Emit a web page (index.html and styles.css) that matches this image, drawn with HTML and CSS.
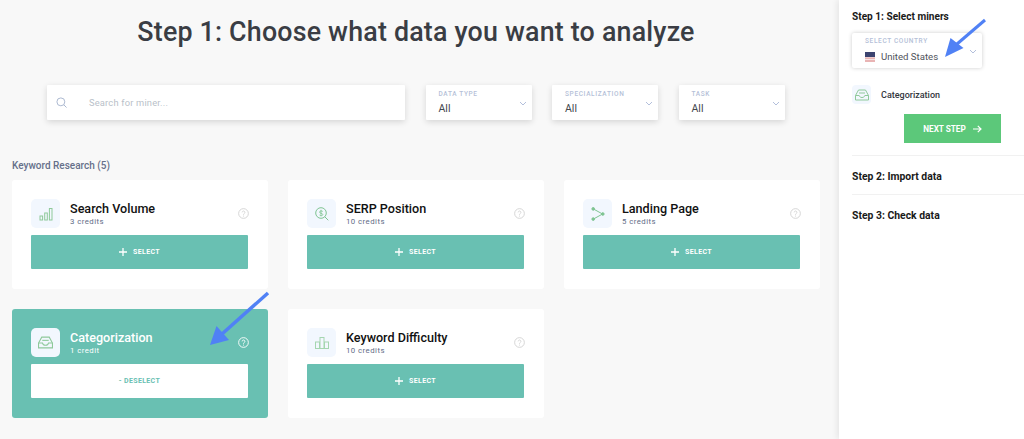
FILE: index.html
```html
<!doctype html>
<html lang="en">
  <head>
    <title>Choose data</title>
    <meta charset="utf-8" />
    <link rel="stylesheet" href="styles.css">
  </head>

  <body>
    <svg width="0" height="0" class="defs">
      <symbol id="i-help" viewBox="0 0 12 12">
        <circle cx="6" cy="6" r="5.300" fill="none" stroke="currentColor" stroke-width="1"/>
        <path d="M4.500 4.800a1.500 1.500 0 1 1 2.400 1.200c-.6.4-.9.7-.9 1.300" fill="none" stroke="currentColor" stroke-width="1"/>
        <circle cx="6" cy="8.800" r=".6" fill="currentColor"/>
      </symbol>
      <symbol id="i-chev" viewBox="0 0 8 5">
        <path d="M1 1l3 3 3-3" fill="none" stroke="currentColor" stroke-width="1"/>
      </symbol>
      <symbol id="i-plus" viewBox="0 0 8 8">
        <path d="M4 0v8M0 4h8" fill="none" stroke="currentColor" stroke-width="1.300"/>
      </symbol>
      <symbol id="i-tray" viewBox="0 0 14 12">
        <g fill="none" stroke="#8ec99a" stroke-width="1">
          <path d="M3.500 1h7l3 5.500V11H.5V6.500z"/>
          <path d="M.5 6.500h3.700c.3 1.400 1.400 2 2.800 2s2.500-.6 2.800-2h3.700"/>
          <path d="M4 4h6"/>
        </g>
      </symbol>
    </svg>

    <main class="content">
      <h1>Step 1: Choose what data you want to analyze</h1>

      <div class="filters">
        <div class="search">
          <svg width="11" height="11" viewBox="0 0 12 12" class="search-icon">
            <circle cx="5.300" cy="5.300" r="4.300" fill="none" stroke="currentColor" stroke-width="1"/>
            <path d="M8.500 8.500l3 3" stroke="currentColor" stroke-width="1"/>
          </svg>
          <span class="placeholder">Search for miner...</span>
        </div>
        <div class="filter">
          <span class="filter-label">DATA TYPE</span>
          <span class="filter-value">All</span>
          <svg class="chev"><use href="#i-chev"/></svg>
        </div>
        <div class="filter">
          <span class="filter-label">SPECIALIZATION</span>
          <span class="filter-value">All</span>
          <svg class="chev"><use href="#i-chev"/></svg>
        </div>
        <div class="filter">
          <span class="filter-label">TASK</span>
          <span class="filter-value">All</span>
          <svg class="chev"><use href="#i-chev"/></svg>
        </div>
      </div>

      <h2>Keyword Research (5)</h2>

      <div class="cards">
        <div class="card">
          <div class="card-head">
            <div class="miner-icon">
              <svg width="14" height="14" viewBox="0 0 14 14" fill="none" stroke="#8ec99a" stroke-width="1">
                <rect x="1" y="9" width="2.600" height="4"/>
                <rect x="5.700" y="6" width="2.600" height="7"/>
                <rect x="10.400" y="1.500" width="2.600" height="11.500"/>
              </svg>
            </div>
            <div class="card-text">
              <div class="card-title">Search Volume</div>
              <div class="card-credits">3 credits</div>
            </div>
            <svg class="help"><use href="#i-help"/></svg>
          </div>
          <div class="btn"><svg class="plus"><use href="#i-plus"/></svg>SELECT</div>
        </div>

        <div class="card">
          <div class="card-head">
            <div class="miner-icon">
              <svg width="14" height="14" viewBox="0 0 14 14" fill="none" stroke="#7fc492" stroke-width="1">
                <circle cx="6" cy="6" r="5.300"/>
                <path d="M9.800 9.800l3.500 3.500"/>
                <path d="M7.800 4.500c-.7-.9-3.300-.8-3.300.6 0 1.700 3.300.8 3.300 2.500 0 1.300-2.600 1.400-3.300.4M6 2.800v6.400" stroke-width=".8"/>
              </svg>
            </div>
            <div class="card-text">
              <div class="card-title">SERP Position</div>
              <div class="card-credits">10 credits</div>
            </div>
            <svg class="help"><use href="#i-help"/></svg>
          </div>
          <div class="btn"><svg class="plus"><use href="#i-plus"/></svg>SELECT</div>
        </div>

        <div class="card">
          <div class="card-head">
            <div class="miner-icon">
              <svg width="14" height="14" viewBox="0 0 14 14" fill="none" stroke="#7fc492" stroke-width="1">
                <path d="M2.500 2l9 5-9 5"/>
                <circle cx="2.200" cy="1.900" r="1.300" fill="#7fc492"/>
                <circle cx="11.800" cy="7" r="1.300" fill="#7fc492"/>
                <circle cx="2.200" cy="12.100" r="1.300" fill="#7fc492"/>
              </svg>
            </div>
            <div class="card-text">
              <div class="card-title">Landing Page</div>
              <div class="card-credits">5 credits</div>
            </div>
            <svg class="help"><use href="#i-help"/></svg>
          </div>
          <div class="btn"><svg class="plus"><use href="#i-plus"/></svg>SELECT</div>
        </div>

        <div class="card card-active">
          <div class="card-head">
            <div class="miner-icon">
              <svg width="15" height="13"><use href="#i-tray"/></svg>
            </div>
            <div class="card-text">
              <div class="card-title">Categorization</div>
              <div class="card-credits">1 credit</div>
            </div>
            <svg class="help"><use href="#i-help"/></svg>
          </div>
          <div class="btn btn-white">- DESELECT</div>
        </div>

        <div class="card">
          <div class="card-head">
            <div class="miner-icon">
              <svg width="14" height="12" viewBox="0 0 14 12" fill="none" stroke="#a5d6b0" stroke-width="1">
                <rect x=".5" y="5" width="4" height="6.500"/>
                <rect x="5" y=".5" width="4" height="11"/>
                <rect x="9.500" y="5" width="4" height="6.500"/>
              </svg>
            </div>
            <div class="card-text">
              <div class="card-title">Keyword Difficulty</div>
              <div class="card-credits">10 credits</div>
            </div>
            <svg class="help"><use href="#i-help"/></svg>
          </div>
          <div class="btn"><svg class="plus"><use href="#i-plus"/></svg>SELECT</div>
        </div>
      </div>
    </main>

    <aside class="sidebar">
      <section class="step step-first">
        <h3>Step 1: Select miners</h3>
        <div class="country">
          <span class="filter-label">SELECT COUNTRY</span>
          <div class="country-value">
            <svg width="10" height="10" viewBox="0 0 10 10" class="flag">
              <rect width="10" height="10" fill="#e9b4b4"/>
              <path d="M0 2.500h10M0 5h10M0 7.500h10" stroke="#f6e4e4" stroke-width="1"/>
              <rect width="10" height="5" fill="#3c4470"/>
            </svg>
            United States
          </div>
          <svg class="chev"><use href="#i-chev"/></svg>
        </div>
        <div class="picked">
          <div class="miner-icon miner-icon-small">
            <svg width="14" height="12"><use href="#i-tray"/></svg>
          </div>
          <span>Categorization</span>
        </div>
        <div class="next-row">
          <div class="next">NEXT STEP
            <svg width="9" height="8" viewBox="0 0 9 8" fill="none" stroke="#fff" stroke-width="1.200">
              <path d="M0 4h8M4.800 .8L8 4 4.800 7.200"/>
            </svg>
          </div>
        </div>
      </section>
      <section class="step"><h3>Step 2: Import data</h3></section>
      <section class="step"><h3>Step 3: Check data</h3></section>
    </aside>

    <svg class="arrow arrow-card" width="70" height="62" viewBox="0 0 70 62">
      <path d="M65 3L19 44" stroke="#5081f5" stroke-width="3.500" fill="none"/>
      <path d="M7 55l6.500-19 12.500 14z" fill="#5081f5"/>
    </svg>
    <svg class="arrow arrow-side" width="50" height="46" viewBox="0 0 50 46">
      <path d="M45 4L17 28" stroke="#5081f5" stroke-width="3" fill="none"/>
      <path d="M5 41l5.500-19 13 10z" fill="#5081f5"/>
    </svg>
  </body>
</html>
```

FILE: styles.css
```css
* {
  box-sizing: border-box;
}

html,
body {
  height: 100%;
}

body {
  font-family: Roboto, "Liberation Sans", sans-serif;
  margin: 0;
  display: flex;
  position: relative;
  overflow: hidden;
  background-color: #f8f8f8;
  color: #111;
}

.defs {
  display: none;
}

.content {
  width: 839px;
  flex: none;
  padding: 15px 19px 0 12px;
}

h1 {
  margin: 0;
  height: 37px;
  font-size: 26.800px;
  line-height: 34px;
  font-weight: 500;
  letter-spacing: 0.200px;
  text-align: center;
  color: #3a3d44;
}

.filters {
  display: flex;
  margin-top: 33px;
  padding-left: 35px;
  gap: 20.500px;
}

.search,
.filter {
  height: 35px;
  background-color: #fff;
  box-shadow: 0 2px 6px rgba(0, 0, 0, 0.14);
  border-radius: 1px;
}

.search {
  width: 358px;
  display: flex;
  align-items: center;
  padding-left: 9px;
  color: #a4b2cc;
}

.search-icon {
  flex: none;
}

.placeholder {
  margin-left: 22px;
  font-size: 9.300px;
  letter-spacing: 0.200px;
  color: #b9bfc9;
}

.filter {
  width: 106px;
  position: relative;
  padding: 5px 0 0 13px;
}

.filter-label {
  display: block;
  font-size: 6.500px;
  line-height: 8px;
  font-weight: 500;
  letter-spacing: 0.650px;
  color: #b5bfd8;
}

.filter-value {
  display: block;
  margin-top: 5px;
  font-size: 10.500px;
  line-height: 12px;
  color: #44474d;
}

.chev {
  position: absolute;
  right: 5px;
  top: 16px;
  width: 8px;
  height: 5px;
  color: #b3bfdb;
}

h2 {
  margin: 40px 0 8px;
  font-size: 10px;
  line-height: 12px;
  font-weight: 500;
  color: #66708a;
}

.cards {
  display: grid;
  grid-template-columns: repeat(3, 256px);
  grid-auto-rows: 109px;
  gap: 20px;
}

.card {
  background-color: #fff;
  border-radius: 3px;
  padding: 19px 20px 19px 19px;
}

.card-active {
  background-color: #69c0b2;
  color: #fff;
}

.card-head {
  display: flex;
  align-items: center;
  height: 29px;
  margin-bottom: 7px;
}

.miner-icon {
  width: 29px;
  height: 29px;
  flex: none;
  display: flex;
  align-items: center;
  justify-content: center;
  background-color: #f2f7fe;
  border-radius: 5px;
}

.miner-icon-small {
  width: 19px;
  height: 19px;
  border-radius: 4px;
}

.card-text {
  flex: 1;
  padding-left: 10px;
}

.card-title {
  font-size: 12.600px;
  line-height: 15px;
  font-weight: 500;
}

.card-credits {
  font-size: 7.800px;
  line-height: 11px;
  letter-spacing: 0.450px;
  color: #626c86;
}

.help {
  width: 11px;
  height: 11px;
  margin-right: -1px;
  color: #d2d2d2;
}

.card-active .card-credits,
.card-active .help {
  color: #fff;
}

.btn {
  height: 34px;
  display: flex;
  align-items: center;
  justify-content: center;
  background-color: #69c0b2;
  border-radius: 1px;
  font-size: 7px;
  font-weight: 700;
  letter-spacing: 0.350px;
  color: #fff;
}

.btn-white {
  background-color: #fff;
  color: #69c0b2;
}

.plus {
  width: 8px;
  height: 8px;
  margin-right: 6px;
}

.sidebar {
  flex: 1;
  padding-left: 13px;
  background-color: #fff;
  box-shadow: -2px 0 6px rgba(0, 0, 0, 0.08);
}

.step {
  padding: 14px 0 12px;
  border-top: 1px solid #f1f1f1;
  height: 39px;
}

.step-first {
  height: 155px;
  padding-top: 10px;
  border-top: 0;
}

h3 {
  margin: 0;
  font-size: 10.400px;
  line-height: 14px;
  font-weight: 700;
  color: #1a1a1a;
}

.step-first h3 {
  font-size: 10.100px;
}

.country {
  position: relative;
  width: 130px;
  height: 35px;
  margin-top: 9px;
  padding: 4px 0 0 13px;
  border-radius: 2px;
  background-color: #fff;
  box-shadow: 0 0 4px rgba(0, 0, 0, 0.2);
}

.country-value {
  display: flex;
  align-items: center;
  gap: 6px;
  margin-top: 6px;
  font-size: 9.600px;
  line-height: 12px;
  color: #50545c;
}

.picked {
  display: flex;
  align-items: center;
  gap: 10px;
  margin-top: 17px;
  font-size: 9px;
  font-weight: 500;
  color: #33363d;
}

.next-row {
  display: flex;
  margin-top: 10px;
  padding-left: 52px;
}

.next {
  width: 97px;
  height: 29px;
  display: flex;
  align-items: center;
  justify-content: center;
  gap: 7px;
  background-color: #5cc87a;
  font-size: 8.200px;
  font-weight: 700;
  color: #fff;
}

.arrow {
  position: absolute;
}

.arrow-card {
  left: 203px;
  top: 290px;
}

.arrow-side {
  left: 940px;
  top: 16px;
}
```
